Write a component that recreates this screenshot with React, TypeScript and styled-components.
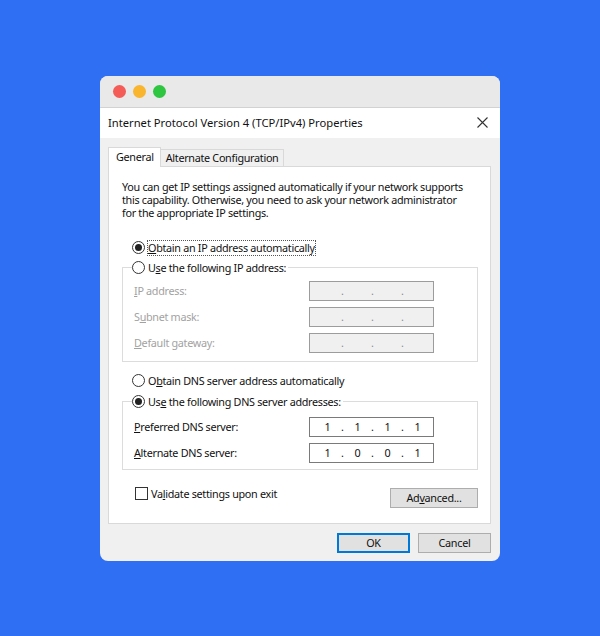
import styled, { createGlobalStyle } from 'styled-components';

const GlobalStyle = createGlobalStyle`
  html, body {
    margin: 0;
    padding: 0;
  }
  body {
    background: #2f6ff3;
    font-family: 'Segoe UI', 'Noto Sans', sans-serif;
    font-size: 10.8px;
    letter-spacing: -0.3px;
    color: #111;
  }
`;

const Page = styled.div`
  display: flex;
  align-items: center;
  justify-content: center;
  width: 600px;
  height: 636px;
`;

const Window = styled.div`
  display: flex;
  flex-direction: column;
  width: 400px;
  height: 485px;
  border-radius: 8px;
  overflow: hidden;
  background: #f0f0f0;
`;

const MacBar = styled.div`
  display: flex;
  flex-shrink: 0;
  align-items: center;
  gap: 7px;
  height: 31px;
  padding: 1px 0 0 13px;
  box-sizing: border-box;
  height: 32px;
  background: #e9e9e9;
  border-bottom: 1px solid #d2d2d2;
`;

const Light = styled.span<{ $color: string }>`
  width: 13px;
  height: 13px;
  border-radius: 50%;
  background: ${({ $color }) => $color};
`;

const Header = styled.div`
  display: flex;
  flex-shrink: 0;
  align-items: center;
  justify-content: space-between;
  height: 30px;
  padding: 0 12px 0 8px;
  background: #fff;
  font-size: 11.2px;
  letter-spacing: 0;
`;

const Body = styled.div`
  display: flex;
  flex: 1;
  flex-direction: column;
  min-height: 0;
  padding: 9px 9px 8px 8px;
`;

const Tabs = styled.div`
  display: flex;
  flex-shrink: 0;
  align-items: flex-end;
  margin-bottom: -1px;
  position: relative;
  z-index: 1;
`;

const Tab = styled.div<{ $active?: boolean }>`
  display: flex;
  align-items: center;
  box-sizing: border-box;
  height: ${({ $active }) => ($active ? '20px' : '18px')};
  padding: ${({ $active }) => ($active ? '0 6px 1px 7px' : '0 4px 0 5px')};
  border: 1px solid #d9d9d9;
  border-bottom: ${({ $active }) => ($active ? 'none' : '1px solid #d9d9d9')};
  border-left: ${({ $active }) => ($active ? '1px solid #d9d9d9' : 'none')};
  background: ${({ $active }) => ($active ? '#fff' : '#f0f0f0')};
`;

const Panel = styled.div`
  display: flex;
  flex: 1;
  flex-direction: column;
  padding: 13px 12px 0 13px;
  background: #fff;
  border: 1px solid #d9d9d9;
`;

const Info = styled.p`
  margin: 0;
  line-height: 13px;
  white-space: nowrap;
`;

const Option = styled.label<{ $mt?: number }>`
  display: flex;
  align-items: center;
  gap: 3px;
  height: 16px;
  margin-top: ${({ $mt }) => $mt ?? 0}px;
  padding-left: 10px;
`;

const Radio = styled.span<{ $checked?: boolean }>`
  display: flex;
  flex-shrink: 0;
  align-items: center;
  justify-content: center;
  box-sizing: border-box;
  width: 13px;
  height: 13px;
  border: 1px solid #333;
  border-radius: 50%;
  background: #fff;

  &::after {
    content: '';
    display: ${({ $checked }) => ($checked ? 'block' : 'none')};
    width: 7px;
    height: 7px;
    border-radius: 50%;
    background: #222;
  }
`;

const Focus = styled.span`
  outline: 1px dotted #555;
  outline-offset: 0;
  line-height: 14px;
`;

const Group = styled.fieldset<{ $mt: number; $pt: number; $pb: number }>`
  display: flex;
  flex-direction: column;
  gap: 6px;
  margin: ${({ $mt }) => $mt}px 0 0 0;
  padding: ${({ $pt, $pb }) => `${$pt}px 0 ${$pb}px 9px`};
  border: 1px solid #dcdcdc;
  min-width: 0;

  legend {
    display: flex;
    align-items: center;
    gap: 3px;
    height: 16px;
    padding: 0 2px 0 0;
  }
`;

const FieldRow = styled.div`
  display: grid;
  grid-template-columns: 175px 125px;
  align-items: center;
  padding-left: 2px;
`;

const FieldLabel = styled.span<{ $disabled?: boolean }>`
  color: ${({ $disabled }) => ($disabled ? '#a2a2a2' : '#111')};
`;

const IpBox = styled.div<{ $disabled?: boolean }>`
  display: flex;
  align-items: center;
  box-sizing: border-box;
  height: 20px;
  padding-left: 4px;
  border: 1px solid ${({ $disabled }) => ($disabled ? '#9c9c9c' : '#7a7a7a')};
  background: ${({ $disabled }) => ($disabled ? '#f0f0f0' : '#fff')};
  color: ${({ $disabled }) => ($disabled ? '#8a8a8a' : '#111')};
  letter-spacing: 0;
`;

const Octet = styled.span`
  width: 27px;
  text-align: center;
`;

const Dot = styled.span`
  width: 3px;
  text-align: center;
`;

const Bottom = styled.div`
  display: flex;
  align-items: flex-start;
  justify-content: space-between;
  margin-top: 17px;
`;

const Check = styled.label`
  display: flex;
  align-items: center;
  gap: 3px;
  padding-left: 13px;
  line-height: 13px;
`;

const Box = styled.span`
  box-sizing: border-box;
  width: 13px;
  height: 13px;
  border: 1px solid #333;
  background: #fff;
`;

const Button = styled.button<{ $width: number; $default?: boolean; $mt?: number }>`
  box-sizing: border-box;
  width: ${({ $width }) => $width}px;
  height: 20px;
  margin-top: ${({ $mt }) => $mt ?? 0}px;
  padding: 0;
  border: 1px solid ${({ $default }) => ($default ? '#0078d7' : '#adadad')};
  box-shadow: ${({ $default }) => ($default ? 'inset 0 0 0 1px #0078d7' : 'none')};
  background: #e1e1e1;
  font-family: inherit;
  font-size: inherit;
  letter-spacing: inherit;
  color: #111;
`;

const Footer = styled.div`
  display: flex;
  flex-shrink: 0;
  justify-content: flex-end;
  gap: 8px;
  margin-top: 9px;
`;

const U = styled.span`
  text-decoration: underline;
`;

function IpField({ value, disabled }: { value?: string[]; disabled?: boolean }) {
  const parts = value ?? ['', '', '', ''];
  return (
    <IpBox $disabled={disabled}>
      {parts.map((p, i) => (
        <span key={i} style={{ display: 'contents' }}>
          <Octet>{p}</Octet>
          {i < 3 && <Dot>.</Dot>}
        </span>
      ))}
    </IpBox>
  );
}

function Close() {
  return (
    <svg width="11" height="11" viewBox="0 0 11 11">
      <path d="M0.5 0.5 L10.5 10.5 M10.5 0.5 L0.5 10.5" stroke="#333" strokeWidth="1.1" />
    </svg>
  );
}

export default function App() {
  return (
    <>
      <GlobalStyle />
      <Page>
        <Window>
          <MacBar>
            <Light $color="#f45c58" />
            <Light $color="#f9b52e" />
            <Light $color="#2ec541" />
          </MacBar>
          <Header>
            <span>Internet Protocol Version 4 (TCP/IPv4) Properties</span>
            <Close />
          </Header>
          <Body>
            <Tabs>
              <Tab $active>General</Tab>
              <Tab>Alternate Configuration</Tab>
            </Tabs>
            <Panel>
              <Info>
                You can get IP settings assigned automatically if your network supports
                <br />
                this capability. Otherwise, you need to ask your network administrator
                <br />
                for the appropriate IP settings.
              </Info>

              <Option $mt={21}>
                <Radio $checked />
                <Focus>
                  <U>O</U>btain an IP address automatically
                </Focus>
              </Option>

              <Group $mt={4} $pt={5} $pb={8}>
                <legend>
                  <Radio />
                  <span>
                    U<U>s</U>e the following IP address:
                  </span>
                </legend>
                <FieldRow>
                  <FieldLabel $disabled>
                    <U>I</U>P address:
                  </FieldLabel>
                  <IpField disabled />
                </FieldRow>
                <FieldRow>
                  <FieldLabel $disabled>
                    S<U>u</U>bnet mask:
                  </FieldLabel>
                  <IpField disabled />
                </FieldRow>
                <FieldRow>
                  <FieldLabel $disabled>
                    <U>D</U>efault gateway:
                  </FieldLabel>
                  <IpField disabled />
                </FieldRow>
              </Group>

              <Option $mt={11}>
                <Radio />
                <span>
                  O<U>b</U>tain DNS server address automatically
                </span>
              </Option>

              <Group $mt={5} $pt={7} $pb={6}>
                <legend>
                  <Radio $checked />
                  <span>
                    Us<U>e</U> the following DNS server addresses:
                  </span>
                </legend>
                <FieldRow>
                  <FieldLabel>
                    <U>P</U>referred DNS server:
                  </FieldLabel>
                  <IpField value={['1', '1', '1', '1']} />
                </FieldRow>
                <FieldRow>
                  <FieldLabel>
                    <U>A</U>lternate DNS server:
                  </FieldLabel>
                  <IpField value={['1', '0', '0', '1']} />
                </FieldRow>
              </Group>

              <Bottom>
                <Check>
                  <Box />
                  <span>
                    Va<U>l</U>idate settings upon exit
                  </span>
                </Check>
                <Button $width={88} $mt={1}>
                  Ad<U>v</U>anced...
                </Button>
              </Bottom>
            </Panel>
            <Footer>
              <Button $width={73} $default>
                OK
              </Button>
              <Button $width={73}>Cancel</Button>
            </Footer>
          </Body>
        </Window>
      </Page>
    </>
  );
}
